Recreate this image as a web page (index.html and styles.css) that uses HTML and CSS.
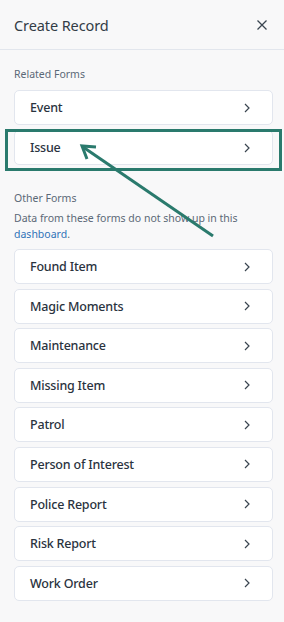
FILE: index.html
```html
<!DOCTYPE html>
<html>
<head>
<meta charset="utf-8">
<link rel="stylesheet" href="styles.css">
</head>
<body>
<div class="panel">
  <header class="header">
    <h1 class="title">Create Record</h1>
    <svg class="close" width="12" height="12" viewBox="0 0 12 12"><path d="M1.5 1.5 L10.5 10.5 M10.5 1.5 L1.5 10.5" stroke="#3a4550" stroke-width="1.3" fill="none"/></svg>
  </header>
  <section class="section related">
    <div class="label">Related Forms</div>
    <div class="list">
      <div class="item"><span>Event</span><svg class="chev" viewBox="0 0 6 10"><path d="M1 1 L5 5 L1 9" stroke="#3a4550" stroke-width="1.2" fill="none"/></svg></div>
      <div class="item"><span>Issue</span><svg class="chev" viewBox="0 0 6 10"><path d="M1 1 L5 5 L1 9" stroke="#3a4550" stroke-width="1.2" fill="none"/></svg></div>
    </div>
  </section>
  <section class="section other">
    <div class="label">Other Forms</div>
    <p class="desc">Data from these forms do not show up in this <span class="link">dashboard</span>.</p>
    <div class="list">
      <div class="item"><span>Found Item</span><svg class="chev" viewBox="0 0 6 10"><path d="M1 1 L5 5 L1 9" stroke="#3a4550" stroke-width="1.2" fill="none"/></svg></div>
      <div class="item"><span>Magic Moments</span><svg class="chev" viewBox="0 0 6 10"><path d="M1 1 L5 5 L1 9" stroke="#3a4550" stroke-width="1.2" fill="none"/></svg></div>
      <div class="item"><span>Maintenance</span><svg class="chev" viewBox="0 0 6 10"><path d="M1 1 L5 5 L1 9" stroke="#3a4550" stroke-width="1.2" fill="none"/></svg></div>
      <div class="item"><span>Missing Item</span><svg class="chev" viewBox="0 0 6 10"><path d="M1 1 L5 5 L1 9" stroke="#3a4550" stroke-width="1.2" fill="none"/></svg></div>
      <div class="item"><span>Patrol</span><svg class="chev" viewBox="0 0 6 10"><path d="M1 1 L5 5 L1 9" stroke="#3a4550" stroke-width="1.2" fill="none"/></svg></div>
      <div class="item"><span>Person of Interest</span><svg class="chev" viewBox="0 0 6 10"><path d="M1 1 L5 5 L1 9" stroke="#3a4550" stroke-width="1.2" fill="none"/></svg></div>
      <div class="item"><span>Police Report</span><svg class="chev" viewBox="0 0 6 10"><path d="M1 1 L5 5 L1 9" stroke="#3a4550" stroke-width="1.2" fill="none"/></svg></div>
      <div class="item"><span>Risk Report</span><svg class="chev" viewBox="0 0 6 10"><path d="M1 1 L5 5 L1 9" stroke="#3a4550" stroke-width="1.2" fill="none"/></svg></div>
      <div class="item"><span>Work Order</span><svg class="chev" viewBox="0 0 6 10"><path d="M1 1 L5 5 L1 9" stroke="#3a4550" stroke-width="1.2" fill="none"/></svg></div>
    </div>
  </section>
  <div class="highlight"></div>
  <svg class="arrow" width="284" height="622" viewBox="0 0 284 622">
    <path d="M213 236 L83 147" stroke="#2a7a6d" stroke-width="3" fill="none"/>
    <path d="M96 147 L82 146 L87 159" stroke="#2a7a6d" stroke-width="3" fill="none" stroke-linejoin="miter"/>
  </svg>
</div>
</body>
</html>
```

FILE: styles.css
```css
html, body {
  margin: 0;
  padding: 0;
  background: #f8f8f9;
}
body {
  font-family: "Noto Sans", "Open Sans", sans-serif;
  color: #2e3842;
  width: 284px;
  height: 622px;
  overflow: hidden;
}
.panel {
  position: relative;
  height: 622px;
}
.header {
  height: 49px;
  border-bottom: 1px solid #e2e6ed;
  display: flex;
  align-items: center;
  justify-content: space-between;
  padding: 0 16px 0 14px;
}
.title {
  margin: 0;
  font-size: 14.5px;
  font-weight: 400;
  color: #323c46;
  letter-spacing: -0.1px;
}
.close {
  display: block;
}
.section {
  padding: 0 11px 0 14px;
}
.related {
  padding-top: 16px;
}
.other {
  padding-top: 25px;
}
.label {
  font-size: 10.5px;
  color: #5b6877;
  line-height: 16px;
  margin-bottom: 8px;
}
.other .label {
  margin-bottom: 4px;
}
.desc {
  margin: 0 0 7px;
  font-size: 10.5px;
  line-height: 16px;
  color: #5b6877;
  padding-right: 4px;
}
.link {
  color: #2f73b8;
}
.list {
  display: flex;
  flex-direction: column;
  gap: 5px;
}
.other .list {
  gap: 4.6px;
}
.item {
  height: 33px;
  background: #fff;
  border: 1px solid #e2e6ee;
  border-radius: 5px;
  display: flex;
  align-items: center;
  justify-content: space-between;
  padding: 0 22px 0 15px;
  font-size: 12.5px;
  font-weight: 500;
  color: #2a333e;
  letter-spacing: -0.2px;
}
.chev {
  width: 6px;
  height: 10px;
  display: block;
}
.highlight {
  position: absolute;
  left: 5px;
  top: 129px;
  width: 271px;
  height: 36px;
  border: 3px solid #2a7a6d;
}
.arrow {
  position: absolute;
  left: 0;
  top: 0;
  pointer-events: none;
}
```
